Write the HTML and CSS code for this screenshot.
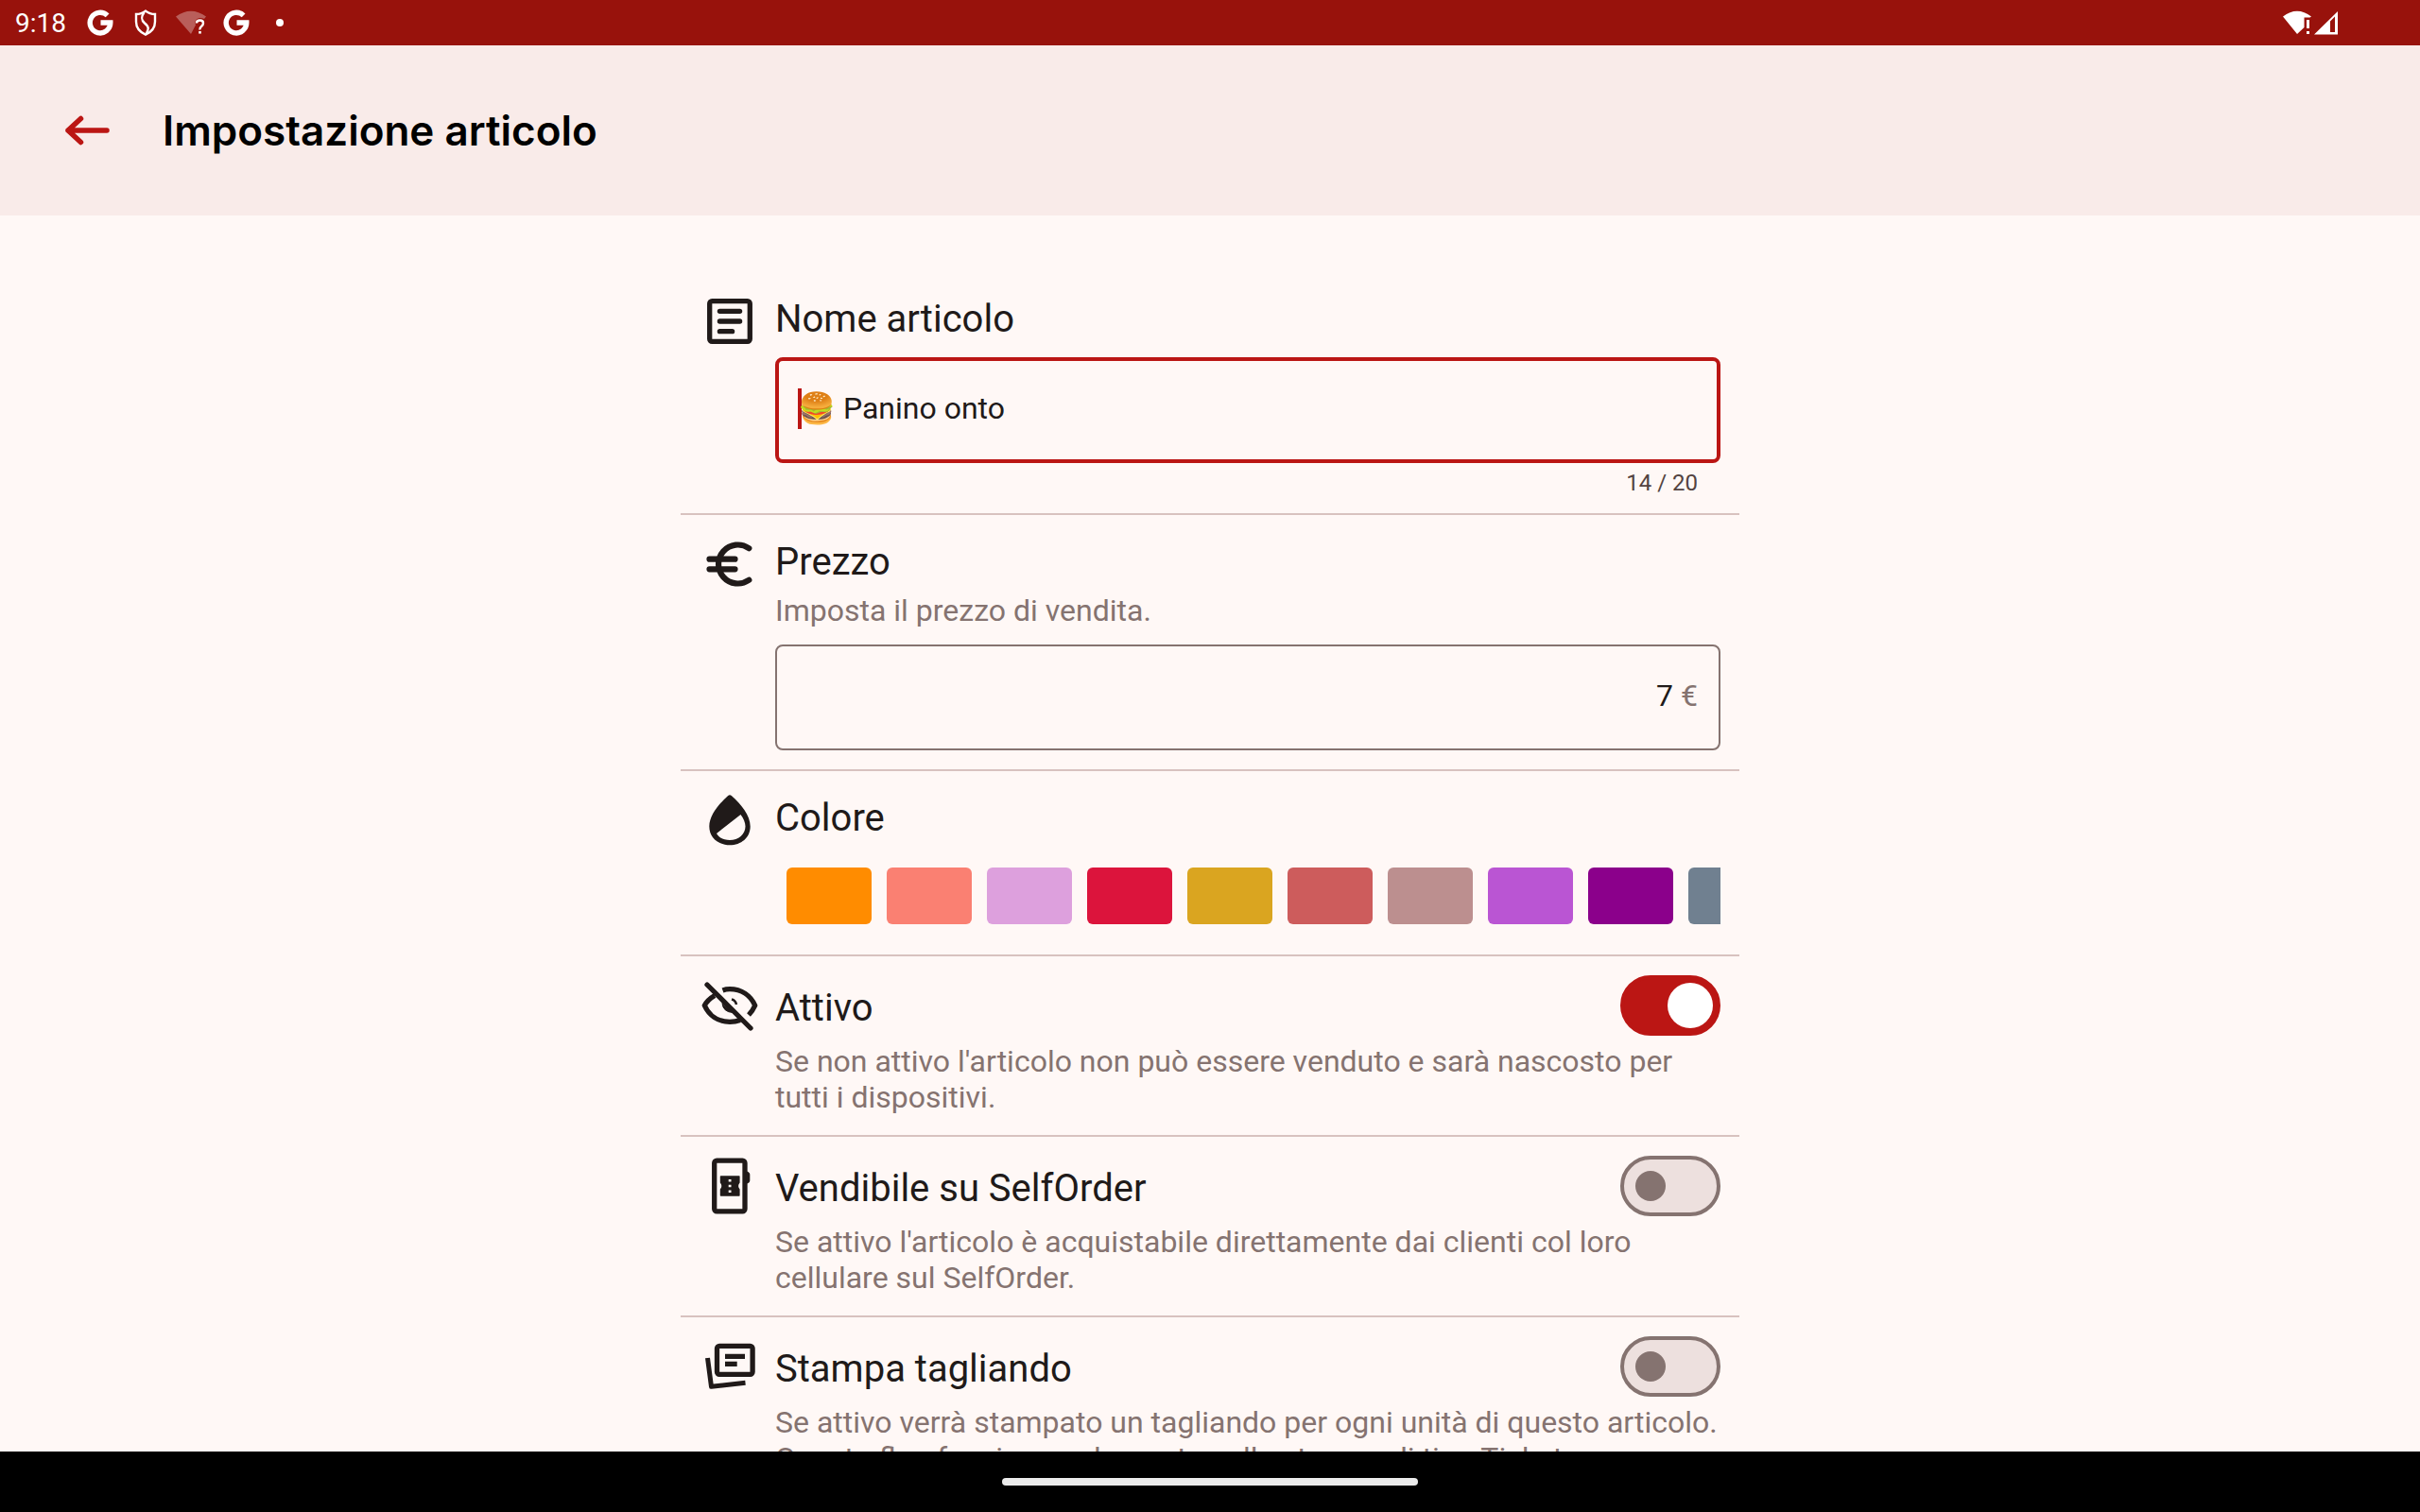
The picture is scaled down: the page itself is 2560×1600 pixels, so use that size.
FILE: index.html
```html
<!DOCTYPE html>
<html lang="it">
<head>
<meta charset="utf-8">
<meta name="viewport" content="width=device-width, initial-scale=1">
<title>Impostazione articolo</title>
<link rel="stylesheet" href="styles.css">
</head>
<body>
<svg class="defs" aria-hidden="true">
  <symbol id="google" viewBox="0 0 28 28">
    <path d="M21.6 6.4A10.8 10.8 0 1 0 24.8 14H14.5" fill="none" stroke="currentColor" stroke-width="5.4"/>
  </symbol>
</svg>

<div class="status-bar">
  <span class="clock">9:18</span>
  <svg class="status-icon" viewBox="0 0 28 28"><use href="#google"/></svg>
  <svg class="status-icon" viewBox="0 0 28 28">
    <path d="M14 1.6C11 4 7.500 5 4 5V13C4 19.500 8 24 14 26.600C20 24 24 19.500 24 13V5C20.500 5 17 4 14 1.600Z" fill="none" stroke="currentColor" stroke-width="2.400"/>
    <path d="M12.500 3C9 8 9 11 13 14.500C18 18.500 17.500 21 14.500 26" fill="none" stroke="currentColor" stroke-width="2.400"/>
  </svg>
  <svg class="status-icon wide" viewBox="0 0 32 28">
    <path d="M0 7.500Q16-4 32 7.500L30 10C24 7 19 11 21 16.500L16 26Z" fill="#fff" opacity=".32"/>
    <path d="M22 14.500Q22 11.500 25.500 11.500T29 14.500Q29 16.500 27 18T25.500 21.500" fill="none" stroke="#fff" stroke-width="2.400"/>
    <path d="M24.200 23h2.600v2.600h-2.600z" fill="#fff"/>
  </svg>
  <svg class="status-icon" viewBox="0 0 28 28"><use href="#google"/></svg>
  <span class="more-dot"></span>
  <svg class="signal" viewBox="0 0 60 28">
    <path d="M1 7.500Q16-4 31 7.500L29.500 8.500H23.500V19L16 26Z" fill="#fff"/>
    <path d="M26 11h3v9h-3zM26 23h3v3h-3z" fill="#fff"/>
    <path d="M59 2V26.500H34ZM56 7.500L51 12.500V24H56Z" fill="#fff" fill-rule="evenodd"/>
  </svg>
</div>

<header class="app-bar">
  <button class="back" type="button" aria-label="Indietro">
    <svg viewBox="0 0 48 48"><path d="M17.500 11.500L4 24L17.500 36.500M4 24H45" fill="none" stroke="currentColor" stroke-width="5.500" stroke-linecap="round" stroke-linejoin="round"/></svg>
  </button>
  <h1>Impostazione articolo</h1>
</header>

<main>
  <form class="settings">
    <section class="row row-counted">
      <svg class="icon" viewBox="0 0 56 56">
        <rect x="6.700" y="6.700" width="42.600" height="42.600" rx="2.500" fill="none" stroke="currentColor" stroke-width="5.300"/>
        <path d="M17.400 17.300H38.600M17.400 28H38.600M17.400 38.700H30.600" stroke="currentColor" stroke-width="5.300" stroke-linecap="round"/>
      </svg>
      <div class="content">
        <label class="title" for="name">Nome articolo</label>
        <div class="field field-active">
          <span class="caret"></span>
          <input id="name" type="text" value="🍔 Panino onto">
        </div>
        <div class="counter">14 / 20</div>
      </div>
    </section>

    <section class="row">
      <svg class="icon" viewBox="0 0 56 56">
        <path d="M48.300 11.200A20.500 20.500 0 1 0 48.300 44.800M6.500 22.700H33.500M6.500 33.300H33.500" fill="none" stroke="currentColor" stroke-width="6.200" stroke-linecap="round"/>
      </svg>
      <div class="content">
        <label class="title" for="price">Prezzo</label>
        <p class="desc">Imposta il prezzo di vendita.</p>
        <div class="field field-price">
          <input id="price" type="text" inputmode="decimal" value="7">
          <span class="unit">€</span>
        </div>
      </div>
    </section>

    <section class="row">
      <svg class="icon" viewBox="0 0 56 56">
        <path d="M26.200 2Q28 .4 29.800 2C40 11 49.700 23 49.700 34.500C49.700 46.500 40 54.300 28 54.300S6.300 46.500 6.300 34.500C6.300 23 16 11 26.200 2ZM39.500 22L14 42C17 47 22 49 28 49C37 49 44.500 43 44.500 34.500C44.500 30.500 42.500 26 39.500 22Z" fill="currentColor" fill-rule="evenodd"/>
      </svg>
      <div class="content">
        <h2 class="title">Colore</h2>
        <div class="swatches">
          <button type="button" class="swatch" aria-label="Arancione" style="background:#ff8c00"></button>
          <button type="button" class="swatch" aria-label="Salmone" style="background:#fa8072"></button>
          <button type="button" class="swatch" aria-label="Prugna" style="background:#dda0dd"></button>
          <button type="button" class="swatch" aria-label="Cremisi" style="background:#dc143c"></button>
          <button type="button" class="swatch" aria-label="Oro" style="background:#daa520"></button>
          <button type="button" class="swatch" aria-label="Rosso indiano" style="background:#cd5c5c"></button>
          <button type="button" class="swatch" aria-label="Rosa antico" style="background:#bc8f8f"></button>
          <button type="button" class="swatch" aria-label="Orchidea" style="background:#ba55d3"></button>
          <button type="button" class="swatch" aria-label="Magenta scuro" style="background:#8b008b"></button>
          <button type="button" class="swatch" aria-label="Grigio ardesia" style="background:#708090"></button>
        </div>
      </div>
    </section>

    <section class="row row-switch">
      <svg class="icon" viewBox="0 0 56 56" fill="none" stroke="currentColor" stroke-width="5.300" stroke-linecap="round" stroke-linejoin="round">
        <path d="M4 6L50 52"/>
        <path d="M20.500 12Q24 10.700 28 10.700C40.500 10.700 50 17.500 54.700 28Q52.300 33.500 48 38M12 17.500Q4.500 22 1.300 28C6 38.500 15.500 45.300 28 45.300Q34 45.300 39 43.500" stroke-linecap="butt"/>
        <path d="M30 21.500Q34 22.500 35 27" stroke-width="2.500" stroke-linecap="butt"/>
        <path d="M20 26Q21 35 31 35.500Z" fill="currentColor" stroke-width="1"/>
      </svg>
      <div class="content">
        <div class="head">
          <label class="title" for="active">Attivo</label>
          <input id="active" class="switch" type="checkbox" role="switch" checked>
        </div>
        <p class="desc">Se non attivo l'articolo non può essere venduto e sarà nascosto per tutti i dispositivi.</p>
      </div>
    </section>

    <section class="row row-switch">
      <svg class="icon" viewBox="0 0 56 56">
        <rect x="11.700" y="1.200" width="32.300" height="53.600" rx="2.500" fill="none" stroke="currentColor" stroke-width="5.300"/>
        <path d="M46 12.500Q49.300 13.500 49.300 16V22Q49.300 24.500 46 25.500Z" fill="currentColor"/>
        <path d="M18.500 17.300H38Q38.600 17.300 38.600 18V24.500Q35.600 28 38.600 31.500V38Q38.600 38.700 38 38.700H18.500Q17.800 38.700 17.800 38V31.500Q20.800 28 17.800 24.500V18Q17.800 17.300 18.500 17.300ZM26.700 21v2.600h2.800V21zM26.700 26.700v2.600h2.800v-2.600zM26.700 32.400V35h2.800v-2.600z" fill="currentColor" fill-rule="evenodd"/>
      </svg>
      <div class="content">
        <div class="head">
          <label class="title" for="selforder">Vendibile su SelfOrder</label>
          <input id="selforder" class="switch" type="checkbox" role="switch">
        </div>
        <p class="desc">Se attivo l'articolo è acquistabile direttamente dai clienti col loro cellulare sul SelfOrder.</p>
      </div>
    </section>

    <section class="row row-switch">
      <svg class="icon" viewBox="0 0 56 56">
        <rect x="14.500" y="6.300" width="37.600" height="30" rx="2.500" fill="none" stroke="currentColor" stroke-width="5.300"/>
        <path d="M23 14.700H44V20H23ZM23 22.800H35.700V28.100H23Z" fill="currentColor"/>
        <path d="M4.500 19L8.500 49.300L44.500 45.300" fill="none" stroke="currentColor" stroke-width="5" stroke-linejoin="round"/>
      </svg>
      <div class="content">
        <div class="head">
          <label class="title" for="coupon">Stampa tagliando</label>
          <input id="coupon" class="switch" type="checkbox" role="switch">
        </div>
        <p class="desc">Se attivo verrà stampato un tagliando per ogni unità di questo articolo. Questo flag funziona solamente nelle stampe di tipo Ticket.</p>
      </div>
    </section>
  </form>
</main>

<footer class="nav-bar"><span class="pill"></span></footer>
</body>
</html>
```
FILE: styles.css
```css
:root {
  --red: #bb1614;
  --ink: #201a19;
  --muted: #857370;
  --line: #d8c2bf;
  --surface: #fff8f6;
}

* { box-sizing: border-box; }

body {
  margin: 0;
  height: 100vh;
  display: flex;
  flex-direction: column;
  background: var(--surface);
  color: var(--ink);
  font-family: Roboto, "Noto Sans", sans-serif;
}

h1, h2, p { margin: 0; }

button, input { font: inherit; color: inherit; }

.defs { display: none; }

.status-bar {
  flex: none;
  display: flex;
  align-items: center;
  height: 48px;
  padding: 0 86px 0 16px;
  background: #98120c;
  color: #fff;
}

.clock { padding-top: 2px; font-size: 28px; line-height: 32px; margin-right: 22px; }

.status-icon { width: 28px; height: 28px; margin-right: 20px; }

.wide { width: 32px; margin-right: 18px; margin-left: -2px; }

.more-dot {
  width: 8px;
  height: 8px;
  margin-left: 8px;
  border-radius: 50%;
  background: #fff;
}

.signal { width: 60px; height: 28px; margin-left: auto; }

.app-bar {
  flex: none;
  display: flex;
  align-items: center;
  gap: 56px;
  height: 180px;
  padding: 0 68px;
  background: #f9ebe9;
}

.app-bar h1 {
  color: #000;
  font: 600 44px/56px Inter, sans-serif;
}

.back {
  padding: 0;
  border: 0;
  background: none;
  color: var(--red);
}

.back svg { display: block; width: 48px; height: 48px; }

main {
  flex: 1;
  min-height: 0;
  padding: 60px 20px 0;
  overflow: hidden;
}

.settings { max-width: 1120px; margin: 0 auto; }

.row {
  display: flex;
  gap: 20px;
  padding: 24px 20px 20px 24px;
  border-bottom: 2px solid var(--line);
}

.row-counted { padding-bottom: 14px; }

.icon { flex: none; width: 56px; height: 56px; overflow: visible; }

.content { flex: 1; min-width: 0; }

.title {
  display: block;
  font-size: 40px;
  font-weight: 400;
  line-height: 52px;
}

.desc {
  margin-top: 6px;
  padding-bottom: 3px;
  color: var(--muted);
  font-size: 32px;
  line-height: 38px;
}

.field {
  display: flex;
  align-items: center;
  height: 112px;
  margin-top: 14px;
  padding: 0 22px 4px;
  border: 2px solid var(--muted);
  border-radius: 8px;
  font-size: 32px;
}

.field-active { padding: 0 20px 4px; border: 4px solid var(--red); }

.field input {
  flex: 1;
  min-width: 0;
  padding: 0;
  border: 0;
  outline: 0;
  background: none;
}

.field-price { gap: 8px; }

.field-price input { text-align: right; }

.unit { color: var(--muted); }

.caret { width: 4px; height: 43px; margin-right: -4px; background: var(--red); }

.counter {
  margin-top: 4px;
  padding-right: 24px;
  color: #534341;
  font-size: 24px;
  line-height: 35px;
  text-align: right;
}

.swatches {
  display: flex;
  gap: 16px;
  margin-top: 14px;
  padding: 12px;
  overflow: hidden;
}

.swatch {
  flex: none;
  width: 90px;
  height: 60px;
  padding: 0;
  border: 0;
  border-radius: 6px;
}

.row-switch { padding-top: 20px; padding-bottom: 18px; }

.row-switch .icon { margin-top: 4px; }

.head {
  display: flex;
  align-items: center;
  justify-content: space-between;
}

.head .title { padding-top: 6px; }

.head + .desc { margin-top: 8px; }

.switch {
  appearance: none;
  display: flex;
  align-items: center;
  width: 106px;
  height: 64px;
  margin: 0;
  padding: 0 12px;
  border: 4px solid var(--muted);
  border-radius: 32px;
  background: #ede0de;
}

.switch::before {
  content: "";
  width: 32px;
  height: 32px;
  border-radius: 50%;
  background: var(--muted);
}

.switch:checked {
  justify-content: flex-end;
  padding: 0 4px;
  border-color: var(--red);
  background: var(--red);
}

.switch:checked::before { width: 48px; height: 48px; background: #fff; }

.nav-bar {
  flex: none;
  display: flex;
  align-items: center;
  justify-content: center;
  height: 64px;
  background: #000;
}

.pill { width: 440px; height: 8px; border-radius: 4px; background: #ebebeb; }
```
